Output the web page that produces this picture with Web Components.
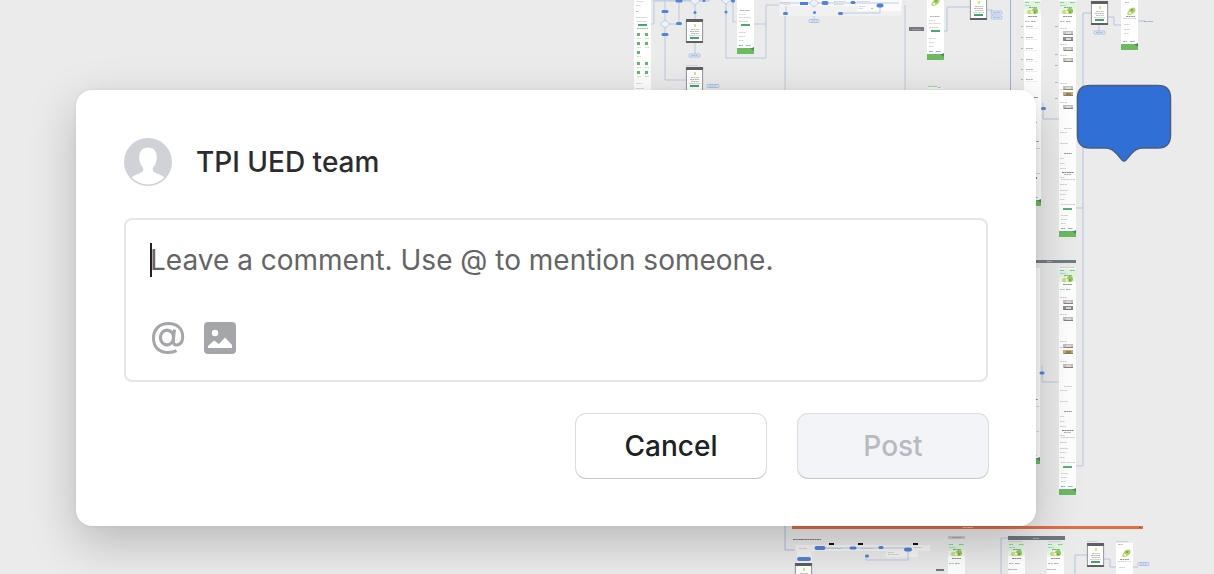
<!DOCTYPE html>
<html lang="en">
<head>
<meta charset="utf-8">
<meta name="viewport" content="width=device-width, initial-scale=1">
<title>Comment</title>
<style>
  body { margin: 0; background: #ebebeb; font-family: Inter, "Liberation Sans", sans-serif; }
</style>
</head>
<body>
<design-canvas>
  <flow-board slot="board"></flow-board>
  <comment-pin slot="pin"></comment-pin>
  <comment-dialog>
    <user-badge slot="author">TPI UED team</user-badge>
    <comment-field slot="field" placeholder="Leave a comment. Use @ to mention someone."></comment-field>
    <action-button slot="actions">Cancel</action-button>
    <action-button slot="actions" disabled>Post</action-button>
  </comment-dialog>
</design-canvas>

<script>
class BaseElement extends HTMLElement {
  connectedCallback() {
    if (this.shadowRoot) return;
    this.attachShadow({ mode: 'open' }).innerHTML = this.render();
    this.ready();
  }
  ready() {}
}

customElements.define('design-canvas', class extends BaseElement {
  render() {
    return `<style>
      :host { display: block; position: relative; box-sizing: border-box; min-height: 100vh; padding: 90px 178px 48px 76px; overflow: hidden; background: #ebebeb; }
      ::slotted([slot=board]) { position: absolute; top: 0; left: 0; }
      ::slotted([slot=pin]) { position: absolute; top: 84px; right: 42px; }
    </style>
    <slot name="board"></slot><slot></slot><slot name="pin"></slot>`;
  }
});

/* Zoomed-out flow diagram behind the dialog: screens, nodes and connectors. */
customElements.define('flow-board', class extends BaseElement {
  render() {
    const r = (x, y, w, h, f) => `<rect x="${x}" y="${y}" width="${w}" height="${h}" fill="${f}"/>`;
    const node = (x, y, w = 6, h = 3) => `<rect x="${x - w / 2}" y="${y - h / 2}" width="${w}" height="${h}" rx="${h / 2}" fill="#5583d3"/>`;
    const wire = (d, c = '#a9b9d9') => `<path d="${d}" fill="none" stroke="${c}" stroke-width=".7"/>`;
    const tag = (x, y, w = 11) => `<rect x="${x}" y="${y}" width="${w}" height="3" rx="1" fill="#e6ecf8" stroke="#8ba7de" stroke-width=".6"/>` + text(x + 2, y + 1, w - 4, '#7590c8');
    const diamond = (x, y) => `<path d="M${x - 5} ${y}l5-4 5 4-5 4z" fill="#edf1f8" stroke="#9fb6e2" stroke-width=".6"/>`;
    const text = (x, y, w, c = '#b3b3b3') => `<path d="M${x} ${y + .5}h${w}" stroke="${c}" stroke-opacity=".6" stroke-width=".9" stroke-dasharray="2 .4"/>`;
    const phone = (x, y, h = 24) => r(x, y, 17, h, '#fff') + r(x, y, 17, 3, '#5d6063') + r(x, y + h - 2, 17, 2, '#5d6063')
      + `<path d="M${x + .4} ${y}v${h}M${x + 16.6} ${y}v${h}" stroke="#666" stroke-width=".7"/>`
      + r(x + 8, y + 5, 2, 3, '#dde386') + text(x + 5, y + 10, 8, '#888') + text(x + 4, y + 12, 9, '#777') + text(x + 5, y + 14, 8, '#888') + text(x + 3, y + 16, 11, '#aaa')
      + r(x + 4, y + 18, 9, 2, '#45a36b');
    const header = (x, y) => r(x, y, 17, 8, '#e0f5de') + r(x, y + 8, 17, 5, '#edf8ea') + text(x + 1, y + 1, 4, '#2f9f5b') + text(x + 11, y + 1, 5, '#2f9f5b')
      + text(x + 1, y + 4, 6, '#78a8d0') + text(x + 5, y + 6, 8, '#44603c')
      + `<ellipse cx="${x + 6}" cy="${y + 11}" rx="3" ry="2.200" fill="#c3de8c"/><ellipse cx="${x + 11}" cy="${y + 10}" rx="3" ry="3" fill="#97c65f"/><circle cx="${x + 8}" cy="${y + 11}" r="1.5" fill="#fff0b0"/><circle cx="${x + 11}" cy="${y + 11}" r="1" fill="#5eac51"/>`
      + text(x + 4, y + 15, 9, '#333') + text(x + 1, y + 20, 5, '#5a9a74') + text(x + 7, y + 20, 5, '#55705f');
    const foot = (x, b) => text(x + 2, b - 9, 4, '#2867c8') + text(x + 9, b - 9, 5, '#2867c8') + r(x, b - 6, 17, 6, '#6dba61') + `<path d="M${x + 13} ${b - 6}h2l2-1v4z" fill="#4a8a5c"/>`;
    const lower = (x, b) => foot(x, b) + r(x + 4, b - 29, 9, 2, '#5ab27d') + text(x + 3, b - 65, 12, '#222') + text(x + 5, b - 63, 7, '#777') + text(x + 5, b - 84, 8, '#444')
      + [[5, 109, 8], [1, 105, 7], [1, 94, 8], [1, 79, 4], [1, 74, 5], [1, 69, 6], [1, 60, 5], [2, 58, 14], [1, 53, 7], [1, 47, 8], [1, 43, 6], [1, 38, 5], [2, 33, 14], [2, 22, 7], [2, 18, 6], [2, 14, 5]].map(t => text(x + t[0], b - t[1], t[2], '#a8b0ac')).join('');
    const thumbs = (x, ys) => ys.map((y, i) => {
      const warm = y === 92 || y === 350;
      return r(x + 4, y, 10, 4, warm ? '#c5b07c' : i === 1 ? '#8b8c8c' : '#c4c1bd') + r(x + 7, y + 1, 5, 2, warm ? '#9b8350' : '#deddd9')
        + `<path d="M${x + 5} ${y + 3.5}h9" stroke="#77736e" stroke-width=".8"/>` + (i === 1 ? '' : text(x + 1, y - 3, 7, '#a8a8a8'));
    }).join('');
    const page = (x, y, h) => r(x, y, 17, h, '#fff');
    const short = (x, y, b) => page(x, y, b - y) + foot(x, b)
      + text(x + 3, b - 44, 10, '#777') + text(x + 2, b - 40, 6) + text(x + 2, b - 37, 12, '#9ac2a3') + text(x + 2, b - 33, 9, '#d1a090')
      + r(x + 4, b - 30, 9, 2, '#49a971') + text(x + 2, b - 22, 7) + text(x + 2, b - 18, 6) + text(x + 2, b - 14, 5);
    const avocado = (x, y) => `<path d="M${x} ${y + 7}q3-8 8-6 2 4-3 6-2 2-5 0z" fill="#b4d272"/><circle cx="${x + 5}" cy="${y + 3}" r="1.3" fill="#79ad48"/><circle cx="${x + 3}" cy="${y + 6}" r="1.3" fill="#eef0a4"/>`;

    let s = '';
    /* upper left flow */
    s += page(634, 0, 100) + text(637, 1, 6) + text(636, 5, 5, '#9aba9f') + text(636, 11, 3, '#888') + text(636, 17, 12) + text(637, 21, 9) + r(638, 24, 9, 2, '#48a56b') + text(637, 28, 11, '#568b62');
    [[33, 2], [42, 2], [51, 1], [62, 2], [71, 2]].forEach(([y, n]) => { for (let i = 0; i < n; i++) s += r(637 + i * 8, y, 3, 3, '#67b568') + text(637 + i * 8, y + 5, 4); });
    s += text(636, 83, 6) + text(636, 88, 8);
    s += wire('M651 24h3V1h55M665 1v79h21M679 1v23h-9M695 0v20M695 43v12M726 0v58h40V5h20M733 0v22h4M754 24h12M785 13v77M652 0h58M814 5v15M840 13h40V6M905 5v85');
    s += node(665, 11.5, 7) + node(665, 34.5, 7) + node(679, 1, 7) + node(679, 23.5, 6) + node(704, 1, 3, 2) + node(695, 12.5, 3) + node(726, 12, 3) + node(733, 1, 4) + diamond(665, 24) + diamond(695, 1) + diamond(726, 0);
    s += phone(686, 19) + tag(689, 54) + phone(686, 67, 28) + tag(707, 84.5, 12) + text(686, 65, 12);
    s += short(737, 0, 54);
    /* top wide group */
    s += r(779, 0, 123, 16, '#f1f1f2') + r(782, 0, 120, 6, '#f9f9f9') + r(858, 0, 43, 11, '#fbfbfb');
    s += text(781, 2, 9) + text(783, 4, 7) + text(834, 1, 12) + text(834, 4, 10) + text(857, 1, 13) + text(859, 6, 6) + text(859, 8, 4) + text(871, 8, 2, '#c86b5a');
    s += wire('M779 3h120M786 13V6M840 13h40V6', '#a5b8e2') + r(800, 2, 8, 3, '#517ce2') + node(825, 3, 7, 4) + node(853, 2.5, 5) + node(880, 5.5, 7, 4) + node(785.5, 13.5, 5) + node(840.5, 13.5, 5) + node(814.5, 12.5, 3) + diamond(814, 3) + tag(809, 19.5, 10);
    s += r(909, 27, 15, 4, '#777a7e') + text(912, 29, 9, '#bbb');
    s += wire('M944 31h3V7h23M987 10h5v7M991 13h4', '#9fb5dc') + wire('M1010.500 0v90', '#7b97d0');
    s += short(927, 0, 60) + avocado(931, -2) + r(928, 87, 15, 2, '#eef8ec') + text(928, 86, 9, '#62a775') + text(938, 87, 3, '#888');
    s += phone(970, -4) + tag(991, 11) + tag(991, 16);
    /* right columns */
    s += page(1024, 0, 206) + header(1024, 1) + lower(1024, 206) + page(1059, 0, 237) + header(1059, 1) + lower(1059, 237) + thumbs(1059, [31, 37, 47, 58, 86, 92, 105]);
    [26, 37, 48, 59, 69, 79].forEach(y => { s += text(1021, y, 2, '#6a84aa') + text(1026, y, 7, '#777') + text(1026, y + 2, 12, '#ddd'); });
    s += text(1034, 97, 4, '#444');
    [26, 54, 65, 82, 98].forEach(y => { s += text(1055, y, 3, '#6a84aa'); });
    s += wire('M1043 103v16h16M1076 208h7V13h9M1107 17h7v8h9M1137 21h8M1099 25v8', '#9db2da') + node(1043.5, 108.5, 5);
    s += phone(1091, 1) + tag(1094, 31) + text(1144, 21, 9, '#5f82c3') + page(1121, 0, 44) + foot(1121, 50) + avocado(1127, 7) + text(1125, 2, 4, '#888') + text(1126, 16, 9, '#444') + text(1123, 18, 13) + text(1124, 24, 6) + text(1124, 29, 6) + text(1124, 33, 5);
    /* lower columns */
    s += r(1020, 260, 56, 3, '#737c84') + text(1047, 261, 5, '#ddd');
    s += page(1023, 268, 196) + lower(1023, 464) + text(1060, 267, 14) + page(1059, 268, 227) + header(1059, 269) + lower(1059, 495) + thumbs(1059, [300, 306, 317, 344, 350, 364]);
    s += wire('M1042 365v17h17M1076 466h7V208', '#a9b9d6') + node(1042, 373, 5);
    /* orange section */
    s += wire('M785 520v30h10', '#91abd9') + r(792, 526, 351, 3, '#e36e46') + text(963, 527, 10, '#fff') + r(1139, 527, 2, 1, '#666') + text(793, 539, 28, '#222') + text(799, 539, 5, '#c05b55');
    s += r(796, 545, 134, 6, '#f8f8f8') + r(797, 546, 15, 28, '#f5f5f6') + r(886, 545, 32, 12, '#f6f6f6') + text(799, 548, 8) + text(827, 548, 15) + text(861, 548, 12) + text(888, 552, 6) + text(888, 554, 11) + text(914, 547, 8);
    s += wire('M866 557v3h42V551M815 548h90', '#a5b8e2') + node(820, 548, 11, 4) + node(853, 548, 7, 3) + node(881, 547.5, 5) + node(908, 549.5, 8, 4) + node(867, 556, 4) + node(804, 559, 14, 4);
    s += [829, 858, 913].map(x => r(x, 543, 5, 2, '#111')).join('') + phone(795, 563);
    s += r(936, 569, 8, 2, '#777') + r(948, 536, 17, 3, '#c7c9cb') + text(952, 537, 9, '#888') + page(948, 543, 31) + header(948, 543);
    s += r(1008, 536, 57, 4, '#707780') + text(1033, 538, 6, '#ddd') + wire('M1001 574V538h7M1075 574V555h12M1103 559h7v8h28', '#9db2da');
    [1008, 1047].forEach(x => { s += text(x + 1, 541, 13) + page(x, 543, 31) + header(x, 543) + text(x, 569, 9, '#777'); });
    s += phone(1087, 543) + page(1116, 543, 31) + avocado(1122, 549) + text(1118, 544, 5, '#888') + text(1120, 559, 9, '#444') + text(1118, 561, 13) + text(1119, 567, 6) + tag(1138, 562.5) + text(1087, 541, 12) + text(1116, 541, 12);
    return `<style>:host { display: block; } svg { display: block; }</style>
      <svg width="1214" height="574" viewBox="0 0 1214 574" aria-hidden="true">${s}</svg>`;
  }
});

customElements.define('comment-pin', class extends BaseElement {
  render() {
    return `<style>:host { display: block; } svg { display: block; }</style>
      <svg width="96" height="80" viewBox="0 0 96 80" aria-hidden="true">
        <path d="M14 1.500H82Q94.500 1.500 94.500 14V51Q94.500 64 82 64H68C61 64 59 66 55 70L50 76Q48 78 46 76L41 70C37 66 35 64 28 64H14Q1.500 64 1.500 51V14Q1.500 1.500 14 1.500Z" fill="#306fd5" stroke="#4a5e83" stroke-width="1.500"/>
      </svg>`;
  }
});

customElements.define('comment-dialog', class extends BaseElement {
  render() {
    return `<style>
      :host { display: block; position: relative; }
      section { display: flex; flex-direction: column; gap: 32px; padding: 48px; border-radius: 16px; background: #fff; box-shadow: 0 16px 48px rgba(0,0,0,.22), 0 0 4px rgba(0,0,0,.06); }
      footer { display: flex; justify-content: flex-end; gap: 32px; }
    </style>
    <section role="dialog" aria-label="New comment">
      <slot name="author"></slot>
      <slot name="field"></slot>
      <footer><slot name="actions"></slot></footer>
    </section>`;
  }
});

customElements.define('user-badge', class extends BaseElement {
  render() {
    return `<style>
      :host { display: flex; align-items: center; gap: 24px; font-size: 28px; line-height: 48px; font-weight: 500; color: #2c2c30; }
      svg { display: block; flex: none; }
    </style>
    <svg width="48" height="48" viewBox="0 0 48 48" aria-hidden="true">
      <circle cx="24" cy="24" r="24" fill="#d1d2d8"/>
      <path d="M24 9.500c5.600 0 8.800 4 8.800 9.800 0 4.200-1.400 8-3.900 10.400-.6 3.300.4 4.300 4 5.700 3 1.100 5.500 2.100 7.600 3.900A22.600 22.600 0 0 1 7.500 39.300c2.100-1.800 4.600-2.800 7.600-3.900 3.600-1.400 4.600-2.400 4-5.700-2.500-2.400-3.900-6.200-3.900-10.400 0-5.800 3.200-9.800 8.800-9.800z" fill="#fff"/>
    </svg>
    <span><slot></slot></span>`;
  }
});

customElements.define('comment-field', class extends BaseElement {
  render() {
    return `<style>
      :host { display: block; position: relative; box-sizing: border-box; border: 2px solid #e6e6e6; border-radius: 8px; padding: 20px 24px 24px; background: #fff; }
      textarea { display: block; box-sizing: border-box; width: 100%; height: 40px; margin: 0 0 40px; padding: 0; border: 0; outline: 0; resize: none; overflow: hidden; background: none; font: 400 28px/40px Inter, "Liberation Sans", sans-serif; color: #222; }
      textarea::placeholder { color: #656567; opacity: 1; }
      .caret { position: absolute; left: 24px; top: 23px; width: 2px; height: 34px; background: #222; }
      .tools { display: flex; gap: 18px; }
      button { display: block; padding: 0; border: 0; background: none; color: #a5a6a9; }
      svg { display: block; }
    </style>
    <textarea aria-label="Comment"></textarea>
    <span class="caret"></span>
    <div class="tools">
      <button type="button" aria-label="Mention someone"><svg width="36" height="36" viewBox="0 0 36 36" fill="none" stroke="currentColor">
        <ellipse cx="17" cy="17.500" rx="6.600" ry="7.400" stroke-width="3.200"/>
        <path d="M24.500 9.500L23.300 19.500C22.800 24 24.600 25.300 27 25 31 24.500 32.700 20.600 32.700 16.500 32.700 8 26.500 3.500 18.500 3.500 9 3.500 3.500 9.600 3.500 18 3.500 27 9 32.400 17.800 32.400 21.100 32.400 24.400 31.800 26.500 30.600" stroke-width="3"/>
      </svg></button>
      <button type="button" aria-label="Add image"><svg width="32" height="36" viewBox="0 0 32 36">
        <path fill="currentColor" fill-rule="evenodd" d="M4 2H28Q32 2 32 6V30Q32 34 28 34H4Q0 34 0 30V6Q0 2 4 2ZM11 9.800A3.200 3.200 0 1 0 11 16.200A3.200 3.200 0 1 0 11 9.800ZM4 28H28V25L21 17.500L15 24L10 20.500L4 26Z"/>
      </svg></button>
    </div>`;
  }
  ready() {
    this.shadowRoot.querySelector('textarea').placeholder = this.getAttribute('placeholder') || '';
  }
});

customElements.define('action-button', class extends BaseElement {
  render() {
    return `<style>
      :host { display: block; }
      button { display: block; box-sizing: border-box; width: 190px; height: 64px; padding: 0; border: 0; border-radius: 10px; background: #fff; color: #202124; font: 500 28px/64px Inter, "Liberation Sans", sans-serif; box-shadow: 0 1px 0 0 #c8c9cb, 0 0 0 1px #dcdddf; }
      button:disabled { background: #f3f4f7; color: #b7babe; }
    </style>
    <button type="button"><slot></slot></button>`;
  }
  ready() {
    this.shadowRoot.querySelector('button').disabled = this.hasAttribute('disabled');
  }
});
</script>
</body>
</html>
